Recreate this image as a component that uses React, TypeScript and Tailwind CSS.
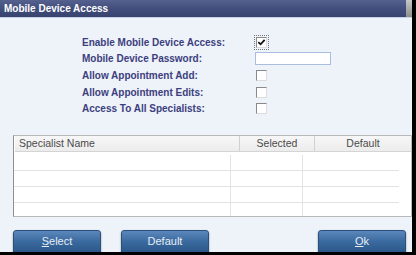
import React from "react";

const rows = [
  { label: "Enable Mobile Device Access:", kind: "checked" },
  { label: "Mobile Device Password:", kind: "input" },
  { label: "Allow Appointment Add:", kind: "box" },
  { label: "Allow Appointment Edits:", kind: "box" },
  { label: "Access To All Specialists:", kind: "box" },
];

const Box = ({ checked }: { checked?: boolean }) => (
  <div
    className={
      "relative w-[11px] h-[11px] bg-white border border-t-[#8a8a8a] border-l-[#8a8a8a] border-r-[#dcdcdc] border-b-[#dcdcdc] " +
      (checked ? "outline outline-1 outline-dotted outline-[#777] outline-offset-1" : "")
    }
  >
    {checked && (
      <svg viewBox="0 0 10 10" className="absolute left-0 top-0 w-[9px] h-[9px]">
        <path d="M1.5 4.5 L4 7 L8.5 2" stroke="#111" strokeWidth="2" fill="none" />
      </svg>
    )}
  </div>
);

const Button = ({ children }: { children: React.ReactNode }) => (
  <div className="w-[88px] h-[23px] rounded-t-[3px] bg-gradient-to-b from-[#5b88bb] via-[#3b6aa0] to-[#2c5888] border border-[#2a4f7c] text-[#e6edf5] text-[11px] flex items-center justify-center shadow-[0_1px_2px_rgba(0,0,0,0.4)]">
    {children}
  </div>
);

export default function App() {
  return (
    <div
      className="w-[416px] h-[255px] bg-black flex"
      style={{ fontFamily: '"Liberation Sans", Arial, sans-serif' }}
    >
      <div className="w-[412px] h-[252px] bg-[#eef2f9] flex flex-col overflow-hidden">
        {/* title */}
        <div className="h-[18px] flex items-center justify-between bg-gradient-to-b from-[#55628f] via-[#424e7c] to-[#38446f] border-b border-[#c9d3e6]">
          <span className="pl-[4px] text-white font-bold text-[10px]">
            Mobile Device Access
          </span>
          <div className="w-[6px] h-[17px] bg-gradient-to-b from-[#c8c8c8] to-[#8e8e8e]" />
        </div>

        {/* form */}
        <div className="pt-[16px] pl-[82px] flex flex-col">
          {rows.map((r) => (
            <div key={r.label} className="h-[16.6px] flex items-center">
              <span className="w-[173px] text-[10px] font-bold text-[#3c3f7e]">{r.label}</span>
              {r.kind === "input" ? (
                <div className="w-[76px] h-[13px] bg-white border border-[#a9bde0]" />
              ) : (
                <div className="pl-[1px]">
                  <Box checked={r.kind === "checked"} />
                </div>
              )}
            </div>
          ))}
        </div>

        {/* table */}
        <div className="mt-[18px] ml-[13px] w-[399px] h-[82px] bg-white border border-[#b9b9b9] border-l-[#8f8f8f] flex flex-col">
          <div className="h-[16px] flex text-[10.5px] text-[#4a4a4a] bg-gradient-to-b from-[#f7f7f7] to-[#ececec] border-b border-[#d4d4d4] ml-[1px]">
            <div className="w-[225px] pl-[4px] flex items-center border-r border-[#d0d0d0]">Specialist Name</div>
            <div className="w-[75px] flex items-center justify-center border-r border-[#d0d0d0]">Selected</div>
            <div className="flex-1 flex items-center justify-center">Default</div>
          </div>
          <div className="flex-1 flex flex-col pt-[3px]">
            {[16, 16, 16, 13].map((h, i) => (
              <div
                key={i}
                className={"w-[385px] flex " + (i < 3 ? "border-b border-[#e3e3e3]" : "")}
                style={{ height: h }}
              >
                <div className="w-[217px] border-r border-[#e3e3e3]" />
                <div className="w-[72px] border-r border-[#e3e3e3]" />
                <div className="flex-1" />
              </div>
            ))}
          </div>
        </div>

        {/* buttons */}
        <div className="mt-[13px] flex pl-[13px] pr-[6px]">
          <Button>
            <span className="underline">S</span>elect
          </Button>
          <div className="ml-[20px]">
            <Button>Default</Button>
          </div>
          <div className="ml-auto">
            <Button>
              <span className="underline">O</span>k
            </Button>
          </div>
        </div>
      </div>
    </div>
  );
}
